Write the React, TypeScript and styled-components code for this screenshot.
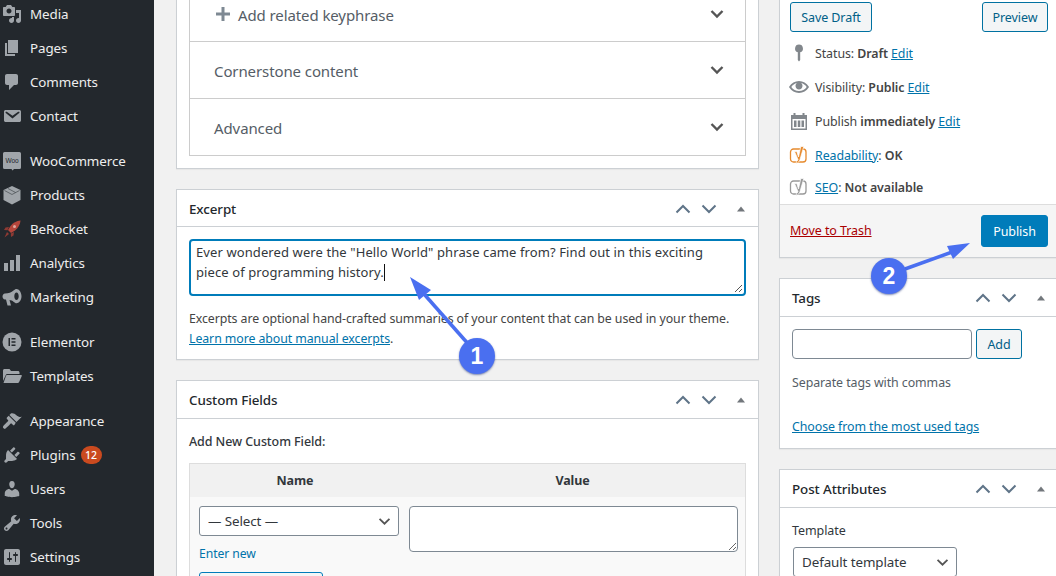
import React from "react";
import styled, { createGlobalStyle } from "styled-components";

const Global = createGlobalStyle`
  html, body { margin: 0; padding: 0; height: 576px; overflow: hidden; background: #f1f1f1; }
  * { box-sizing: border-box; }
  body { font-family: "Noto Sans", "Open Sans", sans-serif; font-size: 13px; color: #444; }
`;

const Page = styled.div`
  position: relative;
  display: flex;
  width: 1056px;
  height: 576px;
  overflow: hidden;
`;
const Sidebar = styled.nav`
  flex: 0 0 154px;
  background: #23282d;
  overflow: hidden;
`;
const NavList = styled.ul`
  list-style: none;
  margin: -3px 0 0;
  padding: 0;
`;
const NavItem = styled.li<{ $gap?: boolean }>`
  height: 34px;
  display: flex;
  align-items: center;
  gap: 8px;
  padding-left: 2px;
  margin-top: ${(p) => (p.$gap ? "11px" : "0")};
  color: #eee;
  font-size: 13.4px;
  letter-spacing: -0.1px;
  white-space: nowrap;
`;
const NavIcon = styled.svg`
  width: 20px;
  height: 20px;
  flex: none;
  fill: #a0a5aa;
`;
const Badge = styled.span`
  display: inline-flex;
  align-items: center;
  justify-content: center;
  width: 21px;
  height: 18px;
  border-radius: 9px;
  margin-left: -3px;
  background: #ca4a1f;
  color: #fff;
  font-size: 10.5px;
  font-weight: 500;
`;
const Main = styled.main`
  flex: 1;
  display: flex;
  gap: 20px;
  padding-left: 22px;
  overflow: hidden;
`;
const LeftColumn = styled.div`
  flex: 0 0 583px;
  display: flex;
  flex-direction: column;
  gap: 20px;
  margin-top: -30px;
`;
const RightColumn = styled.div`
  flex: 0 0 280px;
  display: flex;
  flex-direction: column;
  gap: 20px;
  margin-top: -11px;
`;
const Card = styled.section`
  background: #fff;
  border: 1px solid #ccd0d4;
  box-shadow: 0 1px 1px rgba(0, 0, 0, 0.04);
  flex: none;
`;
const CardHead = styled.header<{ $short?: boolean }>`
  height: ${(p) => (p.$short ? "37px" : "38px")};
  border-bottom: 1px solid #ccd0d4;
  display: flex;
  align-items: center;
  justify-content: space-between;
  padding: ${(p) => (p.$short ? "2px" : "1px")} 12px 0;
  color: #23282d;
  font-size: 13.4px;
  font-weight: 500;
  letter-spacing: -0.1px;
`;
const HeadControls = styled.div`
  display: flex;
  align-items: center;
  gap: 6px;
  margin-right: -5px;
`;
const HeadArrow = styled.svg`
  width: 20px;
  height: 14px;
  fill: none;
  stroke: #5f7488;
  stroke-width: 2;
`;
const HeadCaret = styled.svg`
  width: 20px;
  height: 14px;
  margin-left: 6px;
  fill: #72777c;
`;
const CardBody = styled.div<{ $bottom?: number }>`
  padding: 12px 12px ${(p) => p.$bottom ?? 12}px;
`;
const SeoBox = styled.div`
  border: 1px solid #ccc;
`;
const SeoRow = styled.div`
  height: 57px;
  display: flex;
  align-items: center;
  justify-content: space-between;
  padding: 0 21px 0 24px;
  font-size: 15px;
  letter-spacing: -0.1px;
  color: #555d66;
  &:first-child { padding-top: 2px; }
  & + & { border-top: 1px solid #ccc; }
`;
const SeoLabel = styled.span`
  display: inline-flex;
  align-items: center;
  gap: 8px;
  margin-top: 2px;
`;
const Chevron = styled.svg`
  width: 14px;
  height: 10px;
  fill: none;
  stroke: #555;
  stroke-width: 2.4;
`;
const PlusIcon = styled.svg`
  width: 14px;
  height: 14px;
  margin: -2px 0 0 2px;
  fill: #7e8993;
`;
const FakeArea = styled.div`
  position: relative;
  height: 57px;
  border: 2px solid #007cba;
  border-radius: 4px;
  padding: 1px 8px 2px 5px;
  line-height: 20px;
  color: #32373c;
  font-size: 13px;
  letter-spacing: 0.1px;
`;
const Caret = styled.span`
  display: inline-block;
  width: 1px;
  height: 17px;
  background: #111;
  vertical-align: text-bottom;
`;
const Grip = styled.svg`
  position: absolute;
  right: 1px;
  bottom: 1px;
  width: 10px;
  height: 10px;
  stroke: #555;
  stroke-width: 1;
`;
const Help = styled.p`
  margin: 13px 0 0;
  line-height: 20px;
  color: #444;
  font-size: 12.35px;
  letter-spacing: -0.08px;
  white-space: nowrap;
`;
const Link = styled.a`
  color: #0073aa;
  text-decoration: underline;
`;
const Bold = styled.b`
  font-weight: 600;
`;
const FieldTitle = styled.p`
  margin: 1px 0 11px;
  line-height: 20px;
  font-size: 12.5px;
  font-weight: 500;
  letter-spacing: -0.08px;
  color: #32373c;
`;
const FieldTable = styled.div`
  border: 1px solid #ddd;
  background: #f9f9f9;
  display: grid;
  grid-template-columns: 210px 1fr;
`;
const FieldHead = styled.div`
  height: 33px;
  background: #f1f1f1;
  display: flex;
  align-items: center;
  justify-content: center;
  font-weight: 700;
  font-size: 12.5px;
  letter-spacing: -0.1px;
  color: #32373c;
`;
const FieldCell = styled.div<{ $end?: boolean }>`
  padding: 9px ${(p) => (p.$end ? "7px" : "0")} 40px 9px;
`;
const Select = styled.select<{ $w: number; $inset?: number }>`
  display: block;
  width: ${(p) => p.$w}px;
  height: 30px;
  margin-left: ${(p) => p.$inset ?? 0}px;
  appearance: none;
  background: #fff url("data:image/svg+xml;utf8,<svg xmlns='http://www.w3.org/2000/svg' viewBox='0 0 14 10'><path d='M1.5 2 7 7.5 12.5 2' fill='none' stroke='%23555' stroke-width='2'/></svg>") no-repeat right 7px center / 13px 9px;
  border: 1px solid #7e8993;
  border-radius: 3px;
  padding: 0 24px 0 8px;
  font: inherit;
  font-size: 13.4px;
  letter-spacing: -0.1px;
  color: #32373c;
`;
const EnterNew = styled.a`
  display: block;
  margin-top: 8px;
  line-height: 20px;
  font-size: 12.2px;
  letter-spacing: -0.08px;
  color: #0073aa;
`;
const SubmitStub = styled.div`
  width: 124px;
  height: 30px;
  margin-top: 8px;
  border: 1px solid #007cba;
  border-radius: 3px;
  background: #f3f5f6;
`;
const ValueArea = styled.textarea`
  display: block;
  width: 329px;
  height: 46px;
  border: 1px solid #7e8993;
  border-radius: 4px;
  background: #fff;
`;
const ActionsTop = styled.div`
  display: flex;
  justify-content: space-between;
  padding: 12px 10px 4px 10px;
`;
const OutlineButton = styled.button<{ $w: number }>`
  width: ${(p) => p.$w}px;
  height: 30px;
  padding: 0;
  border: 1px solid #0071a1;
  border-radius: 3px;
  background: #f3f5f6;
  color: #016087;
  font: inherit;
  font-size: 12.5px;
  letter-spacing: -0.08px;
`;
const MetaRow = styled.div<{ $h?: number }>`
  height: ${(p) => p.$h ?? 34}px;
  display: flex;
  align-items: center;
  gap: 6px;
  padding-left: 9px;
  font-size: 12.4px;
  letter-spacing: -0.08px;
  color: #444;
`;
const MetaIcon = styled.svg`
  width: 20px;
  height: 20px;
  flex: none;
  fill: #82878c;
`;
const MetaList = styled.div`
  padding-bottom: 2px;
`;
const ActionsFoot = styled.div`
  height: 53px;
  border-top: 1px solid #ddd;
  background: #f5f5f5;
  display: flex;
  align-items: center;
  justify-content: space-between;
  padding: 0 10px;
`;
const Trash = styled.a`
  color: #a00;
  text-decoration: underline;
  font-size: 12.5px;
  letter-spacing: -0.08px;
  margin-bottom: 2px;
`;
const PublishBtn = styled.button`
  width: 67px;
  height: 32px;
  border: 1px solid #007cba;
  border-radius: 3px;
  background: #007cba;
  color: #fff;
  font: inherit;
  font-size: 12.5px;
  letter-spacing: -0.08px;
  padding: 0;
`;
const TagRow = styled.div`
  display: flex;
  gap: 4px;
`;
const TagInput = styled.input`
  width: 180px;
  height: 30px;
  border: 1px solid #7e8993;
  border-radius: 4px;
  background: #fff;
`;
const Hint = styled.p`
  margin: 14px 0 0;
  line-height: 20px;
  font-size: 12.4px;
  letter-spacing: -0.08px;
  color: #555d66;
`;
const TagLink = styled.p`
  margin: 24px 0 0;
  line-height: 20px;
  font-size: 12.4px;
  letter-spacing: -0.08px;
  white-space: nowrap;
`;
const AttrLabel = styled.p`
  margin: 1px 0 6px;
  line-height: 20px;
  font-size: 12.5px;
  letter-spacing: -0.08px;
  color: #32373c;
`;
const Overlay = styled.svg`
  position: absolute;
  left: 0;
  top: 0;
  width: 1056px;
  height: 576px;
  pointer-events: none;
`;
const Marker = styled.div<{ $x: number; $y: number }>`
  position: absolute;
  left: ${(p) => p.$x - 18}px;
  top: ${(p) => p.$y - 18}px;
  width: 36px;
  height: 36px;
  border-radius: 50%;
  background: #4a6ff0;
  color: #fff;
  font-family: "Liberation Sans", sans-serif;
  font-size: 23px;
  font-weight: 700;
  display: flex;
  align-items: center;
  justify-content: center;
  box-shadow: 0 1px 2px rgba(40, 60, 130, 0.6);
`;

const P: Record<string, React.ReactNode> = {
  media: <path d="M13 11V4c0-.55-.45-1-1-1h-1.67L9 1H5L3.67 3H2c-.55 0-1 .45-1 1v7c0 .55.45 1 1 1h10c.55 0 1-.45 1-1zM7 4.500c1.380 0 2.500 1.120 2.500 2.500S8.380 9.500 7 9.500 4.500 8.380 4.500 7 5.620 4.500 7 4.500zM14 6h5v10.500c0 1.380-1.120 2.500-2.500 2.500S14 17.880 14 16.500s1.120-2.500 2.500-2.500c.17 0 .34.02.5.05V9h-3V6zm-4 8.050V13h2v3.500c0 1.380-1.120 2.500-2.500 2.500S7 17.880 7 16.500 8.120 14 9.500 14c.17 0 .34.02.5.05z" />,
  pages: <path d="M6 15V2h10v13H6zm-1 1h8v2H3V5h2v11z" />,
  comments: <path d="M5 2h9c1.100 0 2 .9 2 2v7c0 1.100-.9 2-2 2h-2l-5 5v-5H5c-1.100 0-2-.9-2-2V4c0-1.100.9-2 2-2z" />,
  contact: <path d="M3.870 4h13.250C18.370 4 19 4.590 19 5.790v8.420c0 1.190-.63 1.790-1.880 1.790H3.870c-1.250 0-1.880-.6-1.880-1.790V5.790c0-1.200.63-1.790 1.880-1.790zm6.620 8.600l6.740-5.530c.24-.2.43-.66.13-1.070-.29-.41-.82-.42-1.170-.17l-5.700 3.860L4.800 5.830c-.35-.25-.88-.24-1.170.17-.3.41-.11.87.13 1.070z" />,
  woo: (
    <>
      <path d="M2.500 1h15A1.500 1.500 0 0 1 19 2.500v14a1.500 1.500 0 0 1-1.500 1.500H12l-1.500 1.600L9.500 18h-7A1.500 1.500 0 0 1 1 16.500v-14A1.500 1.500 0 0 1 2.500 1z" />
      <text x="10" y="12" textAnchor="middle" fontSize="6.5" fontFamily="Liberation Sans, sans-serif" fill="#23282d">Woo</text>
    </>
  ),
  products: (
    <>
      <path d="M10 1l8.500 4v10L10 19.500 1.500 15V5z" />
      <path d="M2.500 5.500L10 9.500l7.500-4M6 3.500l7.500 4" fill="none" stroke="#23282d" strokeWidth=".5" />
    </>
  ),
  rocket: (
    <>
      <path d="M7 8l-3.500.5L2 11l3.500.2zM12 13l-.5 3.500L9 18l-.2-3.500zM5 13l2 2-4.500 3.500z" fill="#8e3a33" />
      <path d="M18.500 1.500c-4 .3-7.500 2.300-10 5.500l-2.500 4 3 3 4-2.500c3.200-2.500 5.200-6 5.500-10z" fill="#b5463c" />
      <circle cx="12.500" cy="7.500" r="1.500" fill="#e0a89e" />
    </>
  ),
  analytics: <path d="M18 18V2h-4v16h4zm-6 0V7H8v11h4zm-6 0v-8H2v8h4z" />,
  marketing: <path d="M14.500 2c-1 0-2 .6-3 1.500C9.500 5.300 6.500 6.500 3 6.500 1.500 6.500.5 8 .5 9.500S1.500 12.500 3 12.500h1l1.500 6H9L7.500 13c1.500.2 3 .8 4 1.700 1 .9 2 1.500 3 1.500 2.500 0 5-3 5-7s-2.500-7.200-5-7.200zm0 11c-1.200 0-2.200-1.600-2.200-3.700s1-3.800 2.200-3.800 2.200 1.700 2.200 3.800-1 3.700-2.200 3.700z" />,
  elementor: (
    <>
      <circle cx="10" cy="10" r="9.500" />
      <path d="M6.500 6H8v8H6.500zM9.500 6h4v1.500h-4zM9.500 9.200h4v1.500h-4zM9.500 12.500h4V14h-4z" fill="#23282d" />
    </>
  ),
  templates: <path d="M1 4.500C1 3.700 1.700 3 2.500 3h5L9 5h7c.8 0 1.500.7 1.500 1.500V8H5.500c-.8 0-1.500.5-1.800 1.200L1 15zM5 9h14c.6 0 1 .6.7 1.200L17 16.200c-.2.5-.7.8-1.200.8H1.500L4 9.800C4.200 9.300 4.500 9 5 9z" />,
  appearance: <path d="M14.480 11.060L7.410 3.990l1.500-1.500c.5-.56 2.300-.47 3.510.32 1.210.8 1.430 1.280 2.910 2.100 1.180.64 2.450 1.260 4.450.85zm-.71.71L6.700 4.700 4.930 6.470c-.39.39-.39 1.020 0 1.410l1.060 1.060c.39.39.39 1.030 0 1.420-.6.6-4.400 4-5 5.500-.4 1 1 2.400 2 2 1.500-.6 4.900-4.400 5.500-5 .39-.39 1.030-.39 1.420 0l1.060 1.060c.39.39 1.020.39 1.410 0z" />,
  plugins: <path d="M13.110 4.360L9.870 7.600 8 5.730l3.240-3.240c.35-.34 1.050-.2 1.560.32.52.51.66 1.210.31 1.550zm-8 1.770l.91-1.120 9.010 9.010-1.190.84c-.71.71-2.630 1.160-3.820 1.160H6.140L4.900 17.260c-.59.59-1.540.59-2.120 0-.59-.58-.59-1.530 0-2.120l1.240-1.240v-3.880c0-1.130.4-3.190 1.090-3.890zm7.260 3.970l3.240-3.240c.34-.35 1.040-.21 1.550.31.52.51.66 1.210.31 1.550l-3.240 3.250z" />,
  users: <path d="M10 9.250c-2.270 0-2.730-3.440-2.730-3.440C7 4.020 7.820 2 9.970 2c2.160 0 2.980 2.020 2.710 3.810 0 0-.41 3.440-2.680 3.440zm0 2.570L12.720 10c2.390 0 4.520 2.330 4.520 4.530v2.490s-3.650 1.130-7.240 1.130c-3.650 0-7.240-1.130-7.240-1.130v-2.490c0-2.250 1.940-4.480 4.470-4.480z" />,
  tools: <path d="M16.680 9.770c-1.340 1.340-3.300 1.670-4.950.99l-5.410 6.520c-.99.99-2.590.99-3.580 0s-.99-2.590 0-3.570l6.520-5.420c-.68-1.650-.35-3.610.99-4.950 1.280-1.280 3.120-1.620 4.720-1.060l-2.890 2.890 2.820 2.820 2.860-2.870c.53 1.580.18 3.390-1.080 4.650zM3.810 16.210c.4.39 1.040.39 1.430 0 .4-.4.4-1.040 0-1.430-.39-.4-1.030-.4-1.430 0-.39.39-.39 1.030 0 1.430z" />,
  settings: <path d="M18 16V4c0-1.100-.9-2-2-2H4c-1.100 0-2 .9-2 2v12c0 1.100.9 2 2 2h12c1.100 0 2-.9 2-2zM8 11h1c.55 0 1 .45 1 1s-.45 1-1 1H8v1.500c0 .28-.22.5-.5.5s-.5-.22-.5-.5V13H6c-.55 0-1-.45-1-1s.45-1 1-1h1V5.500c0-.28.22-.5.5-.5s.5.22.5.5V11zm5-2h-1c-.55 0-1-.45-1-1s.45-1 1-1h1V5.500c0-.28.22-.5.5-.5s.5.22.5.5V7h1c.55 0 1 .45 1 1s-.45 1-1 1h-1v5.500c0 .28-.22.5-.5.5s-.5-.22-.5-.5V9z" />,
};

const nav: { key: string; label: string; gap?: boolean; badge?: string }[] = [
  { key: "media", label: "Media" },
  { key: "pages", label: "Pages" },
  { key: "comments", label: "Comments" },
  { key: "contact", label: "Contact" },
  { key: "woo", label: "WooCommerce", gap: true },
  { key: "products", label: "Products" },
  { key: "rocket", label: "BeRocket" },
  { key: "analytics", label: "Analytics" },
  { key: "marketing", label: "Marketing" },
  { key: "elementor", label: "Elementor", gap: true },
  { key: "templates", label: "Templates" },
  { key: "appearance", label: "Appearance", gap: true },
  { key: "plugins", label: "Plugins", badge: "12" },
  { key: "users", label: "Users" },
  { key: "tools", label: "Tools" },
  { key: "settings", label: "Settings" },
];

const Controls = () => (
  <HeadControls>
    <HeadArrow viewBox="0 0 20 14"><path d="M3.500 10.500 10 4l6.500 6.500" /></HeadArrow>
    <HeadArrow viewBox="0 0 20 14"><path d="M3.500 3.500 10 10l6.500-6.500" /></HeadArrow>
    <HeadCaret viewBox="0 0 20 14"><path d="M6 9.500l4-5 4 5z" /></HeadCaret>
  </HeadControls>
);

const Down = () => (
  <Chevron viewBox="0 0 14 10"><path d="M1.500 2 7 7.500 12.500 2" /></Chevron>
);

const Yoast = ({ color }: { color: string }) => (
  <MetaIcon viewBox="0 0 20 20">
    <rect x="1.500" y="4" width="15.500" height="13" rx="3" fill="none" stroke={color} strokeWidth="1.300" />
    <path d="M5.500 6.500h2.300l1.700 5.500L11.800 1.500h3L11 14.500c-.6 2-1.700 3.300-3.700 4v-2c1-.4 1.500-1 1.700-2z" fill={color} stroke="#fff" strokeWidth=".7" />
  </MetaIcon>
);

export default function App() {
  return (
    <Page>
      <Global />
      <Sidebar>
        <NavList>
          {nav.map((n) => (
            <NavItem key={n.key} $gap={n.gap}>
              <NavIcon viewBox="0 0 20 20">{P[n.key]}</NavIcon>
              <span>{n.label}</span>
              {n.badge && <Badge>{n.badge}</Badge>}
            </NavItem>
          ))}
        </NavList>
      </Sidebar>
      <Main>
        <LeftColumn>
          <Card>
            <CardBody>
              <SeoBox>
                <SeoRow>
                  <SeoLabel>
                    <PlusIcon viewBox="0 0 14 14"><path d="M5.500 0h3v5.500H14v3H8.500V14h-3V8.500H0v-3h5.500z" /></PlusIcon>
                    Add related keyphrase
                  </SeoLabel>
                  <Down />
                </SeoRow>
                <SeoRow><SeoLabel>Cornerstone content</SeoLabel><Down /></SeoRow>
                <SeoRow><SeoLabel>Advanced</SeoLabel><Down /></SeoRow>
              </SeoBox>
            </CardBody>
          </Card>
          <Card>
            <CardHead $short>Excerpt<Controls /></CardHead>
            <CardBody $bottom={10}>
              <FakeArea>
                Ever wondered were the "Hello World" phrase came from? Find out in this exciting piece of programming history.<Caret />
                <Grip viewBox="0 0 10 10"><path d="M9 2 2 9M9 6 6 9" /></Grip>
              </FakeArea>
              <Help>
                Excerpts are optional hand-crafted summaries of your content that can be used in your theme.
                <br />
                <Link>Learn more about manual excerpts</Link>.
              </Help>
            </CardBody>
          </Card>
          <Card>
            <CardHead>Custom Fields<Controls /></CardHead>
            <CardBody>
              <FieldTitle>Add New Custom Field:</FieldTitle>
              <FieldTable>
                <FieldHead>Name</FieldHead>
                <FieldHead>Value</FieldHead>
                <FieldCell>
                  <Select $w={200}><option>— Select —</option></Select>
                  <EnterNew>Enter new</EnterNew>
                  <SubmitStub />
                </FieldCell>
                <FieldCell $end>
                  <ValueArea readOnly />
                </FieldCell>
              </FieldTable>
            </CardBody>
          </Card>
        </LeftColumn>
        <RightColumn>
          <Card>
            <ActionsTop>
              <OutlineButton $w={82}>Save Draft</OutlineButton>
              <OutlineButton $w={66}>Preview</OutlineButton>
            </ActionsTop>
            <MetaList>
              <MetaRow>
                <MetaIcon viewBox="0 0 20 20"><path d="M10 1.500a4 4 0 0 1 1.200 7.800V17l-1.200 1.500L8.800 17V9.300A4 4 0 0 1 10 1.500z" /></MetaIcon>
                <span>Status: <Bold>Draft</Bold> <Link>Edit</Link></span>
              </MetaRow>
              <MetaRow>
                <MetaIcon viewBox="0 0 20 20"><path d="M19.700 9.400C17.700 6 14 3.900 10 3.900S2.300 6 .3 9.400L0 10l.3.6c2 3.400 5.700 5.500 9.700 5.500s7.700-2.100 9.700-5.500l.3-.6-.3-.6zM10 14.100c-3.100 0-6-1.600-7.700-4.100C3.600 8 5.700 6.600 8 6.100c-.9.6-1.500 1.700-1.500 2.900 0 1.900 1.600 3.500 3.500 3.500s3.500-1.600 3.500-3.500c0-1.200-.6-2.300-1.500-2.900 2.300.5 4.400 1.900 5.700 3.900-1.700 2.500-4.600 4.100-7.700 4.100z" /></MetaIcon>
                <span>Visibility: <Bold>Public</Bold> <Link>Edit</Link></span>
              </MetaRow>
              <MetaRow>
                <MetaIcon viewBox="0 0 20 20"><path d="M2 4h2.500V2h2v2h7V2h2v2H18v15H2zm1.500 4v9.500h13V8zM5 9.500h2.500V16H5zM8.800 9.500h2.500V16H8.800zM12.500 9.500H15V16h-2.500z" fillRule="evenodd" /></MetaIcon>
                <span>Publish <Bold>immediately</Bold> <Link>Edit</Link></span>
              </MetaRow>
              <MetaRow>
                <Yoast color="#e68a2e" />
                <span><Link>Readability</Link>: <Bold>OK</Bold></span>
              </MetaRow>
              <MetaRow $h={30}>
                <Yoast color="#999" />
                <span><Link>SEO</Link>: <Bold>Not available</Bold></span>
              </MetaRow>
            </MetaList>
            <ActionsFoot>
              <Trash>Move to Trash</Trash>
              <PublishBtn>Publish</PublishBtn>
            </ActionsFoot>
          </Card>
          <Card>
            <CardHead>Tags<Controls /></CardHead>
            <CardBody $bottom={11}>
              <TagRow>
                <TagInput readOnly />
                <OutlineButton $w={46}>Add</OutlineButton>
              </TagRow>
              <Hint>Separate tags with commas</Hint>
              <TagLink><Link>Choose from the most used tags</Link></TagLink>
            </CardBody>
          </Card>
          <Card>
            <CardHead>Post Attributes<Controls /></CardHead>
            <CardBody>
              <AttrLabel>Template</AttrLabel>
              <Select $w={164} $inset={1}><option>Default template</option></Select>
            </CardBody>
          </Card>
        </RightColumn>
      </Main>
      <Overlay viewBox="0 0 1056 576">
        <path d="M470 346 L424 294" stroke="#4a6ff0" strokeWidth="3.500" fill="none" />
        <path d="M410 277 L431 290 L419 300 Z" fill="#4a6ff0" />
        <path d="M905 269 L955 251" stroke="#4a6ff0" strokeWidth="3.500" fill="none" />
        <path d="M970 243 L947 246 L953 259 Z" fill="#4a6ff0" />
      </Overlay>
      <Marker $x={477} $y={356}>1</Marker>
      <Marker $x={889} $y={276}>2</Marker>
    </Page>
  );
}
